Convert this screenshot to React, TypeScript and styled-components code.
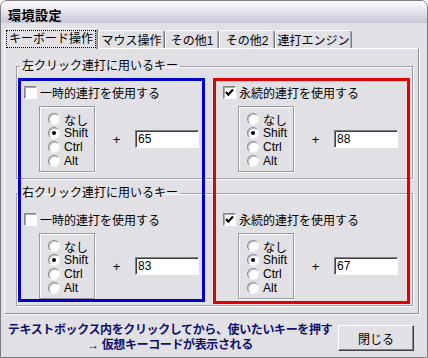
import React from "react";
import styled, { createGlobalStyle } from "styled-components";

const UI_FONT = `"Liberation Sans", "Noto Sans CJK JP", sans-serif`;
const FACE = "#e0e0e5";

const GlobalStyle = createGlobalStyle`
  html, body { margin: 0; padding: 0; background: #ffffff; }
  body { font-family: ${UI_FONT}; font-size: 12px; }
`;

const Window = styled.div`
  box-sizing: border-box;
  width: 428px;
  height: 358px;
  display: flex;
  flex-direction: column;
  background: ${FACE};
  border: 1px solid #7b7b84;
  border-radius: 7px 7px 0 0;
  overflow: hidden;
  font-family: ${UI_FONT};
  font-size: 12px;
  color: #000;
`;

const TitleBar = styled.div`
  box-sizing: border-box;
  height: 22px;
  padding: 8px 0 0 7px;
  background: linear-gradient(#fdfdfe 0%, #ececf2 35%, #c5c5d5 100%);
`;

const Title = styled.span`
  font-size: 13px;
  line-height: 14px;
  font-weight: bold;
  letter-spacing: 0.5px;
`;

const Body = styled.div`
  flex: 1;
  display: flex;
  flex-direction: column;
  padding: 5px 8px 0 3px;
`;

const TabStrip = styled.div`
  display: flex;
  align-items: flex-end;
  height: 20px;
  position: relative;
  z-index: 1;
`;

const Tab = styled.div<{ $w: number; $active?: boolean }>`
  box-sizing: border-box;
  width: ${(p) => p.$w}px;
  height: ${(p) => (p.$active ? 21 : 18)}px;
  margin-bottom: ${(p) => (p.$active ? -1 : 0)}px;
  display: flex;
  align-items: center;
  justify-content: center;
  background: ${FACE};
  border: 1px solid;
  border-bottom: none;
  border-color: #ffffff #7c7c84 transparent #ffffff;
  border-radius: 3px 3px 0 0;
  box-shadow: inset -1px 0 0 #ababb2;
  white-space: nowrap;
`;

const FocusLabel = styled.span`
  padding: 1px 2px;
  line-height: 14px;
  outline: 1px dotted #000;
`;

const Panel = styled.div`
  position: relative;
  box-sizing: border-box;
  height: 266px;
  padding: 10px 5px 0 11px;
  border: 1px solid;
  border-color: #ffffff #8c8c94 #8c8c94 #ffffff;
  box-shadow: 1px 1px 0 #ffffff;
`;

const Group = styled.fieldset`
  margin: 0 0 7px;
  padding: 0;
  min-width: 0;
  border: 1px solid #a0a0a8;
  box-shadow: inset 1px 1px 0 #ffffff, 1px 1px 0 #ffffff;
`;

const GroupLabel = styled.legend`
  margin-left: 3px;
  padding: 0 2px;
  line-height: 14px;
`;

const Columns = styled.div`
  display: grid;
  grid-template-columns: 199px 1fr;
  padding: 12px 0 6px 7px;
`;

const Column = styled.div`
  display: flex;
  flex-direction: column;
`;

const CheckRow = styled.label`
  display: flex;
  align-items: center;
  height: 14px;
  gap: 3px;
  white-space: nowrap;
`;

const CheckBox = styled.span`
  box-sizing: border-box;
  width: 13px;
  height: 13px;
  display: flex;
  align-items: center;
  justify-content: center;
  background: #ffffff;
  border: 1px solid;
  border-color: #858589 #ffffff #ffffff #858589;
  box-shadow: inset 1px 1px 0 #a9a9ae;
`;

const ControlRow = styled.div`
  display: flex;
  align-items: center;
  margin-top: 7px;
`;

const RadioBox = styled.div`
  box-sizing: border-box;
  width: 56px;
  height: 66px;
  margin-left: 15px;
  padding: 5px 0 0 8px;
  border: 1px solid #9a9aa2;
  box-shadow: inset 1px 1px 0 #ffffff, 1px 1px 0 #ffffff;
`;

const RadioRow = styled.div`
  display: flex;
  align-items: center;
  height: 14px;
  gap: 4px;
  white-space: nowrap;
`;

const RadioDot = styled.span<{ $checked?: boolean }>`
  box-sizing: border-box;
  width: 12px;
  height: 12px;
  border-radius: 50%;
  display: flex;
  align-items: center;
  justify-content: center;
  background: #ffffff;
  border: 1px solid;
  border-color: #8a8a90 #f4f4f6 #f4f4f6 #8a8a90;
  box-shadow: inset 1px 1px 0 #c4c4c8;

  &::after {
    content: "";
    width: 4px;
    height: 4px;
    border-radius: 50%;
    background: ${(p) => (p.$checked ? "#000" : "transparent")};
  }
`;

const Plus = styled.span`
  box-sizing: border-box;
  width: 40px;
  padding-left: 3px;
  text-align: center;
  font-size: 13px;
`;

const KeyInput = styled.input`
  box-sizing: border-box;
  width: 64px;
  height: 18px;
  padding: 0 0 0 2px;
  margin: 0;
  font-family: ${UI_FONT};
  font-size: 12px;
  color: #000;
  background: #ffffff;
  border: 1px solid;
  border-color: #808086 #ffffff #ffffff #808086;
  box-shadow: inset 1px 1px 0 #404044;
  outline: none;
`;

const Highlight = styled.div<{ $color: string; $left: number; $width: number; $height: number }>`
  position: absolute;
  top: 29px;
  left: ${(p) => p.$left}px;
  width: ${(p) => p.$width}px;
  height: ${(p) => p.$height}px;
  box-sizing: border-box;
  border: 3px solid ${(p) => p.$color};
  pointer-events: none;
`;

const Footer = styled.div`
  display: flex;
  align-items: center;
  padding-top: 9px;
`;

const Hint = styled.div`
  width: 332px;
  text-align: center;
  font-weight: bold;
  line-height: 15px;
  letter-spacing: -0.38px;
  color: #10106e;
  white-space: nowrap;
`;

const CloseButton = styled.button`
  box-sizing: border-box;
  width: 76px;
  height: 26px;
  margin: 0 0 0 2px;
  padding: 0;
  font-family: ${UI_FONT};
  font-size: 12px;
  color: #000;
  background: ${FACE};
  border: 1px solid;
  border-color: #ffffff #404044 #404044 #ffffff;
  box-shadow: inset -1px -1px 0 #86868c;
`;

const MODIFIERS = ["なし", "Shift", "Ctrl", "Alt"];

function KeyColumn({ label, checked, value }: { label: string; checked?: boolean; value: string }) {
  return (
    <Column>
      <CheckRow>
        <CheckBox>
          {checked && (
            <svg width="9" height="9" viewBox="0 0 9 9">
              <path d="M1 4 L3.3 6.7 L8 1.5" fill="none" stroke="#000" strokeWidth="2.2" />
            </svg>
          )}
        </CheckBox>
        <span>{label}</span>
      </CheckRow>
      <ControlRow>
        <RadioBox>
          {MODIFIERS.map((m) => (
            <RadioRow key={m}>
              <RadioDot $checked={m === "Shift"} />
              {m}
            </RadioRow>
          ))}
        </RadioBox>
        <Plus>+</Plus>
        <KeyInput readOnly value={value} />
      </ControlRow>
    </Column>
  );
}

function KeyGroup({ title, left, right }: { title: string; left: string; right: string }) {
  return (
    <Group>
      <GroupLabel>{title}</GroupLabel>
      <Columns>
        <KeyColumn label="一時的連打を使用する" value={left} />
        <KeyColumn label="永続的連打を使用する" checked value={right} />
      </Columns>
    </Group>
  );
}

const TABS = [
  { label: "キーボード操作", w: 94 },
  { label: "マウス操作", w: 67 },
  { label: "その他1", w: 54 },
  { label: "その他2", w: 56 },
  { label: "連打エンジン", w: 77 },
];

export default function App() {
  return (
    <>
      <GlobalStyle />
      <Window>
        <TitleBar>
          <Title>環境設定</Title>
        </TitleBar>
        <Body>
          <TabStrip>
            {TABS.map((t, i) =>
              i === 0 ? (
                <Tab key={t.label} $w={t.w} $active>
                  <FocusLabel>{t.label}</FocusLabel>
                </Tab>
              ) : (
                <Tab key={t.label} $w={t.w}>
                  {t.label}
                </Tab>
              )
            )}
          </TabStrip>
          <Panel>
            <KeyGroup title="左クリック連打に用いるキー" left="65" right="88" />
            <KeyGroup title="右クリック連打に用いるキー" left="83" right="67" />
            <Highlight $color="#0000c8" $left={13} $width={187} $height={224} />
            <Highlight $color="#e40000" $left={208} $width={197} $height={226} />
          </Panel>
          <Footer>
            <Hint>
              テキストボックス内をクリックしてから、使いたいキーを押す
              <br />→ 仮想キーコードが表示される
            </Hint>
            <CloseButton>閉じる</CloseButton>
          </Footer>
        </Body>
      </Window>
    </>
  );
}
